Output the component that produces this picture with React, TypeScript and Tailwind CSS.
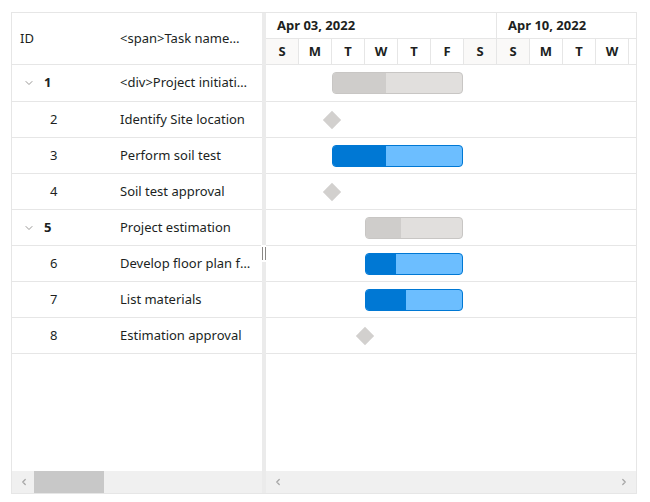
import { ChevronDown, ChevronLeft, ChevronRight } from 'lucide-react';

/**
 * Gantt chart: task grid on the left, timeline on the right.
 */

type Task = {
  id: number;
  name: string;
  parent?: boolean;
  // bar geometry in px from the chart's left edge
  kind: 'summary' | 'task' | 'milestone';
  left: number;
  width?: number;
  progress?: number;
};

const tasks: Task[] = [
  { id: 1, name: '<div>Project initiation</div>', parent: true, kind: 'summary', left: 66, width: 131, progress: 53 },
  { id: 2, name: 'Identify Site location', kind: 'milestone', left: 66 },
  { id: 3, name: 'Perform soil test', kind: 'task', left: 66, width: 131, progress: 53 },
  { id: 4, name: 'Soil test approval', kind: 'milestone', left: 66 },
  { id: 5, name: 'Project estimation', parent: true, kind: 'summary', left: 99, width: 98, progress: 35 },
  { id: 6, name: 'Develop floor plan for estimation', kind: 'task', left: 99, width: 98, progress: 30 },
  { id: 7, name: 'List materials', kind: 'task', left: 99, width: 98, progress: 40 },
  { id: 8, name: 'Estimation approval', kind: 'milestone', left: 99 },
];

const days = [
  { d: 'S', weekend: true },
  { d: 'M' },
  { d: 'T' },
  { d: 'W' },
  { d: 'T' },
  { d: 'F' },
  { d: 'S', weekend: true },
  { d: 'S', weekend: true },
  { d: 'M' },
  { d: 'T' },
  { d: 'W' },
  { d: 'T' },
];

function rowHeight(index: number) {
  return index === 0 ? 'h-[37px]' : 'h-[36px]';
}

function Bar({ task }: { task: Task }) {
  if (task.kind === 'milestone') {
    return (
      <div
        className="absolute top-1/2 h-[13px] w-[13px] -translate-x-1/2 -translate-y-1/2 rotate-45 bg-[#d2d0ce]"
        style={{ left: task.left }}
      />
    );
  }
  const summary = task.kind === 'summary';
  return (
    <div
      className={`absolute top-1/2 flex h-[22px] -translate-y-1/2 overflow-hidden rounded-[4px] border ${
        summary ? 'border-[#c8c6c4] bg-[#e1dfdd]' : 'border-[#0078d4] bg-[#6cbeff]'
      }`}
      style={{ left: task.left, width: task.width }}
    >
      <div
        className={summary ? 'h-full bg-[#cfcdcb]' : 'h-full bg-[#0078d4]'}
        style={{ width: task.progress }}
      />
    </div>
  );
}

export default function App() {
  return (
    <div className="h-[502px] w-[650px] bg-white pl-[11px] pt-[12px] font-['Noto_Sans',sans-serif] text-[13px] text-[#201f1e]">
      <div className="relative flex h-[482px] w-[626px] border border-[#e6e6e6]">
        {/* task grid */}
        <div className="flex w-[250px] flex-col">
          <div className="flex h-[52px] items-center border-b border-[#e6e6e6]">
            <div className="w-[98px] pl-[8px]">ID</div>
            <div className="min-w-0 flex-1 truncate pl-[10px] pr-[20px]">&lt;span&gt;Task name&lt;/span&gt;</div>
          </div>
          {tasks.map((task, i) => (
            <div key={task.id} className={`flex ${rowHeight(i)} items-center border-b border-[#e6e6e6]`}>
              <div className="flex w-[98px] items-center">
                {task.parent ? (
                  <>
                    <ChevronDown className="ml-[11px] h-[12px] w-[12px] text-[#8a8886]" strokeWidth={1.75} />
                    <span className="ml-[9px] font-bold">{task.id}</span>
                  </>
                ) : (
                  <span className="pl-[38px]">{task.id}</span>
                )}
              </div>
              <div className="min-w-0 flex-1 truncate pl-[10px] pr-[8px]">{task.name}</div>
            </div>
          ))}
          <div className="flex-1" />
          <div className="flex h-[22px] items-center bg-[#f0f0f0]">
            <ChevronLeft className="ml-[7px] h-[10px] w-[10px] text-[#a6a6a6]" strokeWidth={3} />
            <div className="ml-[5px] h-full w-[70px] bg-[#c8c8c8]" />
          </div>
        </div>

        {/* splitter */}
        <div className="relative w-[4px] bg-[#ebebeb]">
          <div className="absolute left-[-1px] top-[232px] flex h-[17px] w-[6px] items-center justify-center gap-[2px] bg-white">
            <div className="h-[13px] w-px bg-[#8a8886]" />
            <div className="h-[13px] w-px bg-[#8a8886]" />
          </div>
        </div>

        {/* timeline */}
        <div className="flex min-w-0 flex-1 flex-col overflow-hidden">
          <div className="flex h-[26px] border-b border-[#e6e6e6] font-bold">
            <div className="flex w-[231px] shrink-0 items-center border-r border-[#e6e6e6] pl-[11px]">Apr 03, 2022</div>
            <div className="flex shrink-0 items-center pl-[11px]">Apr 10, 2022</div>
          </div>
          <div className="flex h-[26px] border-b border-[#e6e6e6] font-bold">
            {days.map((day, i) => (
              <div
                key={i}
                className={`flex w-[33px] shrink-0 items-center justify-center border-r border-[#e6e6e6] ${
                  day.weekend ? 'bg-[#faf9f8]' : 'bg-white'
                }`}
              >
                {day.d}
              </div>
            ))}
          </div>
          {tasks.map((task, i) => (
            <div key={task.id} className={`relative ${rowHeight(i)} border-b border-[#e6e6e6]`}>
              <Bar task={task} />
            </div>
          ))}
          <div className="flex-1" />
          <div className="flex h-[22px] items-center justify-between bg-[#f0f0f0] px-[7px]">
            <ChevronLeft className="h-[10px] w-[10px] text-[#a6a6a6]" strokeWidth={3} />
            <ChevronRight className="h-[10px] w-[10px] text-[#a6a6a6]" strokeWidth={3} />
          </div>
        </div>
      </div>
    </div>
  );
}
